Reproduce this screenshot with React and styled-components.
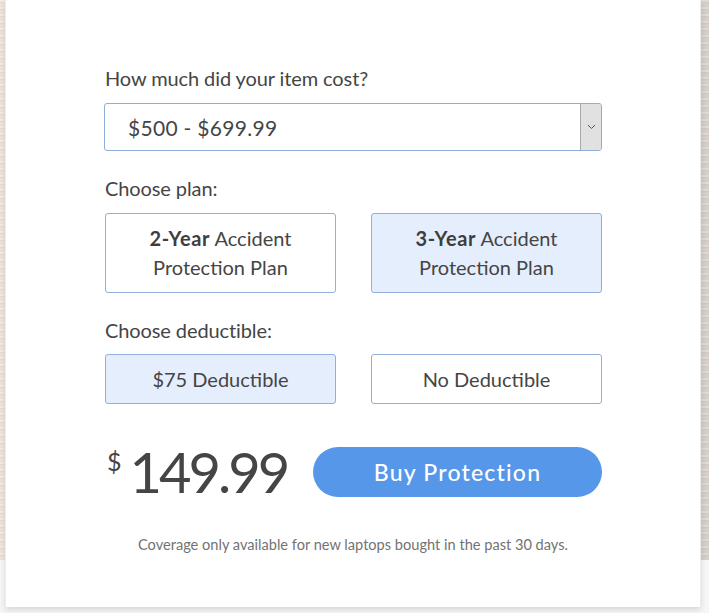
import React, { useState } from "react";
import styled, { createGlobalStyle } from "styled-components";

const Global = createGlobalStyle`
  html, body { margin: 0; padding: 0; }
  body { font-family: Lato, "Noto Sans", sans-serif; color: #444; }
  * { box-sizing: border-box; }
`;

const Page = styled.div`
  width: 709px;
  height: 613px;
  overflow: hidden;
  display: flex;
  align-items: flex-start;
  padding-left: 5px;
  background:
    repeating-linear-gradient(180deg, rgba(255,255,255,0.25) 0 2px, rgba(170,150,135,0.12) 2px 3px, rgba(255,255,255,0) 3px 7px) 0 0 / 100% 560px no-repeat,
    linear-gradient(90deg, #eee3dc 0, #eee3dc 10px, #d6cec8 700px, #d6cec8 709px) 0 0 / 100% 560px no-repeat,
    #f6f6f6;
`;

const Card = styled.div`
  width: 696px;
  height: 607px;
  background: #fff;
  border-left: 1px solid #ececec;
  border-right: 1px solid #ececec;
  box-shadow: 0 3px 6px rgba(0, 0, 0, 0.12);
  padding: 63px 98px 0 98px;
  display: flex;
  flex-direction: column;
`;

const Label = styled.div`
  font-size: 20px;
  line-height: 30px;
  height: 30px;
  color: #454545;
  padding-left: 1px;
  margin-top: ${(p) => p.$mt || 0}px;
  margin-bottom: ${(p) => p.$mb || 10}px;
  letter-spacing: -0.1px;
`;

const Select = styled.div`
  height: 48px;
  border: 1px solid #8eaed6;
  border-radius: 3px;
  display: flex;
  align-items: stretch;
  overflow: hidden;
`;

const SelectValue = styled.div`
  flex: 1;
  padding-left: 23px;
  display: flex;
  align-items: center;
  font-size: 21px;
  letter-spacing: 0.3px;
  color: #454545;
`;

const SelectArrow = styled.div`
  width: 21px;
  background: #e1e1e1;
  border-left: 1px solid #a9a9a9;
  display: flex;
  align-items: center;
  justify-content: center;
`;

const OptionRow = styled.div`
  display: grid;
  grid-template-columns: 231px 231px;
  justify-content: space-between;
  padding-left: 1px;
`;

const Option = styled.button`
  height: ${(p) => p.$h}px;
  border: 1px solid #90afdb;
  border-radius: 3px;
  background: ${(p) => (p.$active ? "#e5eefd" : "#fff")};
  font-family: Lato, "Noto Sans", sans-serif;
  font-size: 20px;
  line-height: 29px;
  color: #454545;
  text-align: center;
  padding: 0 8px;
  cursor: pointer;
  b { font-weight: 700; color: #3e3e3e; letter-spacing: 0.6px; }
`;

const PriceRow = styled.div`
  margin-top: 43px;
  display: flex;
  align-items: center;
  height: 50px;
`;

const Price = styled.div`
  display: flex;
  align-items: flex-start;
  width: 209px;
  padding-left: 3px;
  color: #454545;
`;

const Currency = styled.span`
  font-size: 25px;
  line-height: 25px;
  margin-top: 1px;
  margin-right: 8px;
`;

const Amount = styled.span`
  font-size: 56px;
  font-weight: 400;
  line-height: 48px;
  letter-spacing: -3px;
`;

const BuyButton = styled.button`
  flex: 1;
  height: 50px;
  border: none;
  border-radius: 25px;
  background: #5797e9;
  color: #fff;
  font-family: Lato, "Noto Sans", sans-serif;
  font-size: 23px;
  font-weight: 500;
  letter-spacing: 1.2px;
  cursor: pointer;
`;

const Note = styled.div`
  margin-top: 38px;
  text-align: center;
  font-size: 14.6px;
  line-height: 20px;
  color: #737373;
  letter-spacing: 0;
`;

export default function App() {
  const [plan, setPlan] = useState(3);
  const [ded, setDed] = useState(75);
  return (
    <>
      <Global />
      <Page>
        <Card>
          <Label>How much did your item cost?</Label>
          <Select>
            <SelectValue>$500 - $699.99</SelectValue>
            <SelectArrow>
              <svg width="9" height="6" viewBox="0 0 9 6">
                <path d="M1 1l3.5 3.5L8 1" fill="none" stroke="#555" strokeWidth="1" />
              </svg>
            </SelectArrow>
          </Select>
          <Label $mt={22}>Choose plan:</Label>
          <OptionRow>
            <Option $h={80} $active={plan === 2} onClick={() => setPlan(2)}>
              <b>2-Year</b> Accident<br />Protection Plan
            </Option>
            <Option $h={80} $active={plan === 3} onClick={() => setPlan(3)}>
              <b>3-Year</b> Accident<br />Protection Plan
            </Option>
          </OptionRow>
          <Label $mt={22} $mb={9}>Choose deductible:</Label>
          <OptionRow>
            <Option $h={50} $active={ded === 75} onClick={() => setDed(75)}>
              $75 Deductible
            </Option>
            <Option $h={50} $active={ded === 0} onClick={() => setDed(0)}>
              No Deductible
            </Option>
          </OptionRow>
          <PriceRow>
            <Price>
              <Currency>$</Currency>
              <Amount>149.99</Amount>
            </Price>
            <BuyButton>Buy Protection</BuyButton>
          </PriceRow>
          <Note>Coverage only available for new laptops bought in the past 30 days.</Note>
        </Card>
      </Page>
    </>
  );
}
